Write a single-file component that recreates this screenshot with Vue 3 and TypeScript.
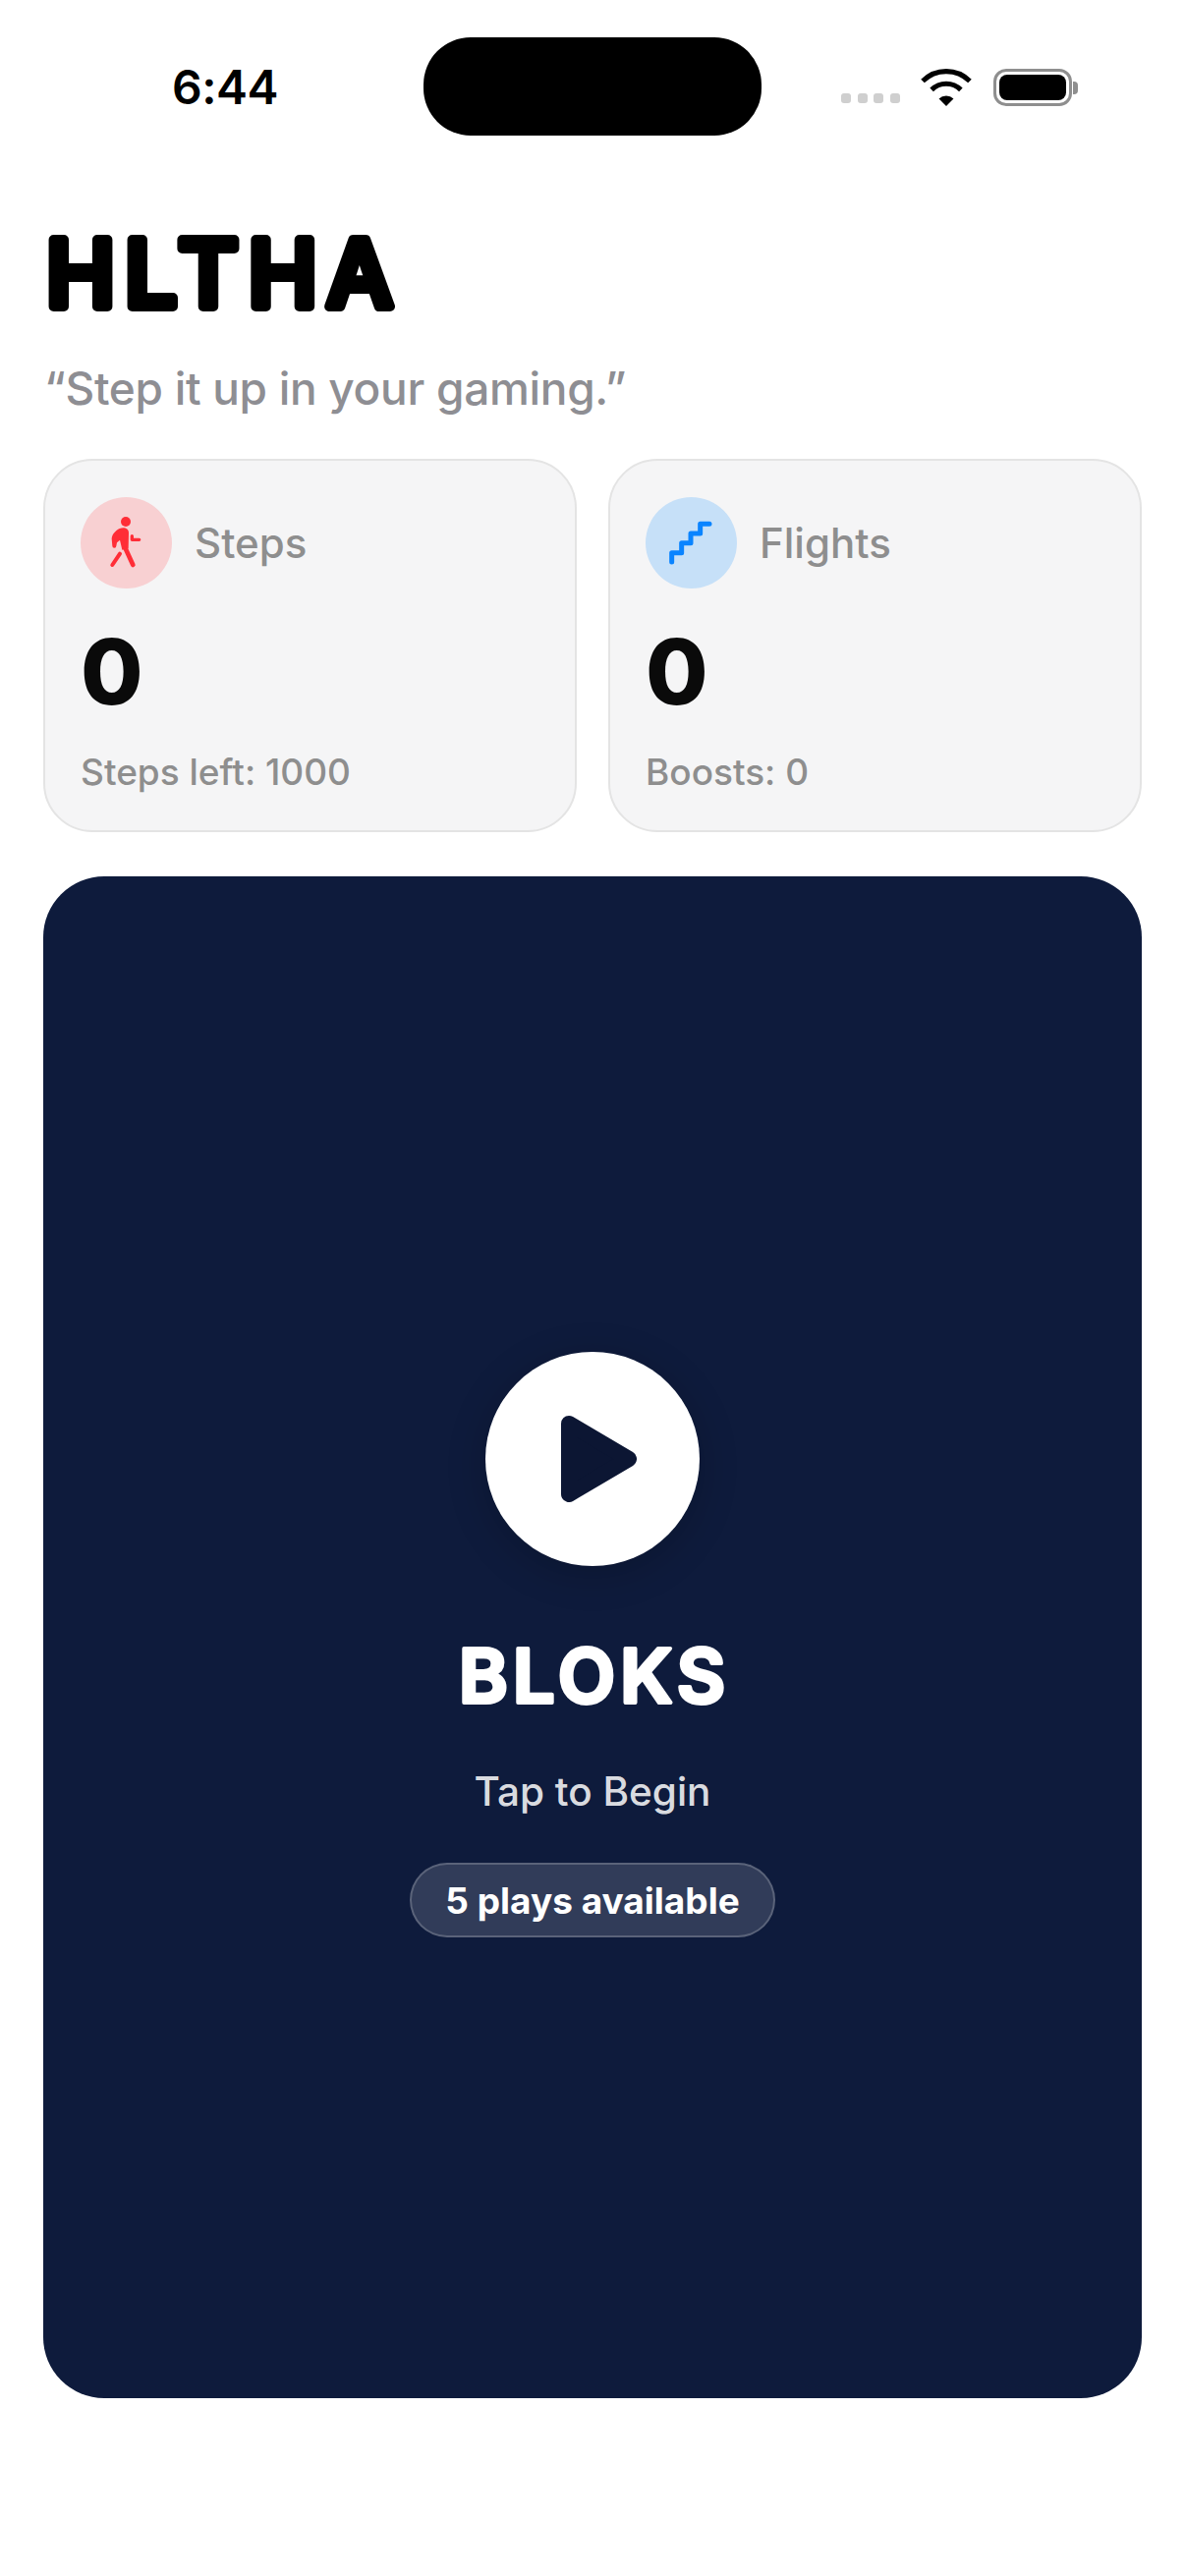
<script setup lang="ts">
const stats = [
  { key: 'steps', label: 'Steps', value: 0, note: 'Steps left: 1000' },
  { key: 'flights', label: 'Flights', value: 0, note: 'Boosts: 0' },
]
</script>

<template>
  <div class="screen">
    <div class="status">
      <span class="time">6:44</span>
      <div class="island" />
      <div class="status-icons">
        <div class="signal"><i /><i /><i /><i /></div>
        <svg class="wifi" viewBox="290 88 157 112" width="53" height="38">
          <path d="M296 125A100 100 0 0 1 438 125" fill="none" stroke="#000" stroke-width="15" />
          <path d="M323 151A62 62 0 0 1 411 151" fill="none" stroke="#000" stroke-width="15" />
          <path d="M367 200L345 178A31 31 0 0 1 389 178Z" fill="#000" />
        </svg>
        <div class="battery"><div class="battery-fill" /></div>
        <div class="battery-nub" />
      </div>
    </div>

    <svg class="title" width="400" height="100">
      <text x="10" y="84">HLTHA</text>
    </svg>
    <p class="tagline">“Step it up in your gaming.”</p>

    <div class="stats">
      <div v-for="s in stats" :key="s.key" class="card">
        <div class="card-head">
          <div class="badge" :class="`badge--${s.key}`">
            <svg v-if="s.key === 'steps'" viewBox="37 47 279 279" width="93" height="93">
              <circle cx="175" cy="122" r="15" fill="#ff2d37" />
              <path d="M156 143C170 138 184 142 184 156L183 204L164 208L157 178L148 186L146 196A6 6 0 0 1 134 196L132 174C133 160 144 149 156 143Z" fill="#ff2d37" />
              <path d="M157 220L134 254" fill="none" stroke="#ff2d37" stroke-width="12" stroke-linecap="round" />
              <path d="M174 204L197 254" fill="none" stroke="#ff2d37" stroke-width="14" stroke-linecap="round" />
              <path d="M194 166V177H216" fill="none" stroke="#ff2d37" stroke-width="10" stroke-linecap="round" stroke-linejoin="round" />
            </svg>
            <svg v-else viewBox="40 47 279 279" width="93" height="93">
              <path d="M120 245V217H150V187H178V158H207V129H235" fill="none" stroke="#0a84ff" stroke-width="15" stroke-linecap="round" stroke-linejoin="round" />
            </svg>
          </div>
          <span class="label">{{ s.label }}</span>
        </div>
        <div class="value">{{ s.value }}</div>
        <div class="note">{{ s.note }}</div>
      </div>
    </div>

    <div class="hero">
      <div class="play">
        <svg viewBox="0 0 77 88" width="77" height="88">
          <path d="M8 8L69 44L8 80Z" fill="#0c1633" stroke="#0c1633" stroke-width="16" stroke-linejoin="round" />
        </svg>
      </div>
      <svg class="game-name" width="300" height="80">
        <text x="152" y="68">BLOKS</text>
      </svg>
      <div class="tap">Tap to Begin</div>
      <div class="plays">5 plays available</div>
    </div>
  </div>
</template>

<style>
html, body { margin: 0; background: #fff; }
</style>

<style scoped>
.screen {
  width: 1206px; height: 2622px; background: #fff; overflow: hidden;
  font-family: Inter, "Liberation Sans", sans-serif;
  display: flex; flex-direction: column;
}

/* status bar */
.status {
  height: 100px; margin-top: 38px; display: flex; align-items: center; flex: none;
}
.time {
  width: 431px; padding-left: 175px; box-sizing: border-box;
  font-size: 48px; font-weight: 600; color: #000; letter-spacing: -0.5px;
}
.island { width: 344px; height: 100px; background: #000; border-radius: 48px; }
.status-icons { display: flex; align-items: center; margin-left: 81px; padding-top: 2px; }
.signal { display: flex; gap: 6.7px; padding-top: 21px; margin-right: 21px; }
.signal i { width: 10px; height: 10px; border-radius: 3px; background: #cfcfcf; display: block; }
.wifi { margin-right: 21px; }
.battery {
  width: 80px; height: 38px; box-sizing: border-box; padding: 3px;
  border: 3px solid #8e8e8e; border-radius: 13px;
}
.battery-fill { width: 100%; height: 100%; background: #000; border-radius: 8px; }
.battery-nub { width: 5px; height: 13px; background: #8e8e8e; border-radius: 0 4px 4px 0; margin-left: 1px; }

/* header */
.title { margin: 90px 0 0 37px; display: block; flex: none; overflow: visible; }
.title text {
  font-size: 94px; font-weight: 500; fill: #000; stroke: #000; stroke-width: 10px;
  stroke-linejoin: round; stroke-linecap: round; letter-spacing: 10px;
}
.tagline {
  margin: 39px 0 0 45px; font-size: 46px; line-height: 56px; font-weight: 500; color: #8e8e93;
  letter-spacing: -0.3px; flex: none;
}

/* stat cards */
.stats { display: flex; gap: 32px; margin: 44px 44px 0; flex: none; }
.card {
  flex: 1; height: 380px; box-sizing: border-box; padding: 37px 36px 0;
  background: #f5f5f6; border: 2px solid #e4e4e4; border-radius: 50px;
}
.card-head { display: flex; align-items: center; gap: 23px; }
.badge { width: 93px; height: 93px; border-radius: 50%; flex: none; }
.badge svg { display: block; }
.badge--steps { background: #f8d0d2; }
.badge--flights { background: #c6e0f8; }
.label { font-size: 42px; font-weight: 500; color: #8e8e8e; }
.value {
  margin-top: 27px; font-size: 92px; line-height: 116px; font-weight: 800; color: #0a0a0a;
}
.note { margin-top: 22px; font-size: 37px; line-height: 44px; font-weight: 500; color: #8e8e8e; }

/* game card */
.hero {
  flex: none; height: 1549px; margin: 45px 44px 0; border-radius: 62px; background: #0e1b3c;
  display: flex; flex-direction: column; align-items: center; justify-content: center;
  padding-top: 15px; box-sizing: border-box;
}
.play {
  width: 218px; height: 218px; border-radius: 50%; background: #fff;
  display: flex; align-items: center; justify-content: center; padding-left: 13px; box-sizing: border-box;
  box-shadow: 0 8px 40px rgba(0, 0, 0, 0.2);
}
.play svg { display: block; }
.game-name { display: block; margin-top: 71px; overflow: visible; }
.game-name text {
  font-size: 76px; font-weight: 600; fill: #fff; stroke: #fff; stroke-width: 4px;
  stroke-linejoin: round; text-anchor: middle; letter-spacing: 5px;
}
.tap { margin-top: 54px; font-size: 40.5px; line-height: 50px; font-weight: 500; color: rgba(255, 255, 255, 0.87); }
.plays {
  margin-top: 47px; height: 76px; padding: 0 34px; box-sizing: border-box;
  display: flex; align-items: center; border-radius: 38px;
  background: rgba(255, 255, 255, 0.15); border: 2px solid rgba(255, 255, 255, 0.2);
  font-size: 37px; font-weight: 700; color: #fff;
}
</style>
